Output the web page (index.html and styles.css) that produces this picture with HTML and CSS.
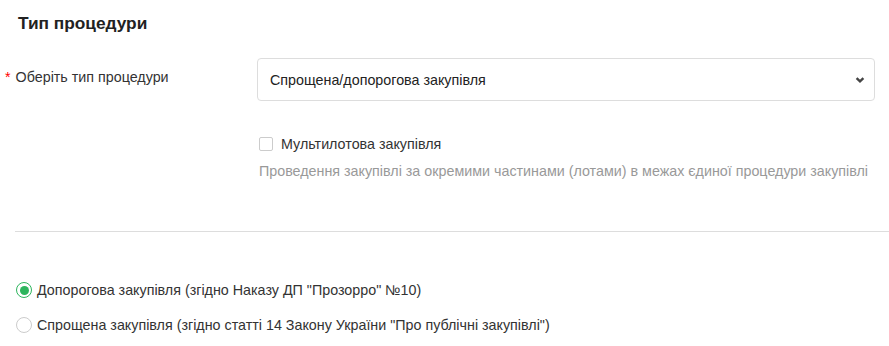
FILE: index.html
```html
<!DOCTYPE html>
<html lang="uk">
<head>
  <meta charset="UTF-8" />
  <title>Тип процедури</title>
  <link rel="stylesheet" href="styles.css">
</head>
<body>

  <!-- Тип процедури -->
  <div class="section">
    <h2 class="section-title">Тип процедури</h2>

    <div class="form-row">
      <label class="form-label"><span class="required">*</span>Оберіть тип процедури</label>
      <div class="form-control">
        <div class="select">
          <span>Спрощена/допорогова закупівля</span>
          <svg class="chevron" width="10" height="8" viewBox="0 0 10 8">
            <path d="M1.6 2.2 L5 5.4 L8.4 2.2" fill="none" stroke="#444" stroke-width="2.4"/>
          </svg>
        </div>
      </div>
    </div>

    <div class="options">
      <label class="checkbox">
        <span class="box"></span>
        Мультилотова закупівля
      </label>
      <p class="hint">Проведення закупівлі за окремими частинами (лотами) в межах єдиної процедури закупівлі</p>
    </div>
  </div>

  <hr class="divider">

  <div class="radio-group">
    <label class="radio checked"><span class="dot"></span>Допорогова закупівля (згідно Наказу ДП "Прозорро" №10)</label>
    <label class="radio"><span class="dot"></span>Спрощена закупівля (згідно статті 14 Закону України "Про публічні закупівлі")</label>
  </div>

</body>
</html>
```

FILE: styles.css
```css
* {
  box-sizing: border-box;
}

body {
  margin: 0;
  font-family: "Liberation Sans", Arial, sans-serif;
  font-size: 14.3px;
  color: #333;
  background-color: #fff;
}

.section {
  padding: 12px 14px 0 5px;
}

.section-title {
  margin: 0 0 24px 13px;
  font-size: 17.3px;
  font-weight: bold;
  color: #222;
  line-height: 22px;
}

.form-row {
  display: flex;
  align-items: center;
}

.form-label {
  width: 252px;
  align-self: flex-start;
  padding-top: 11px;
}

.required {
  color: #f00;
  margin-right: 5px;
}

.form-control {
  flex: 1;
}

.select {
  display: flex;
  align-items: center;
  justify-content: space-between;
  height: 43px;
  padding: 0 9px 0 12px;
  border: 1px solid #ddd;
  border-radius: 4px;
  color: #222;
}

.options {
  margin: 35px 0 0 254px;
}

.checkbox {
  display: flex;
  align-items: center;
  gap: 8px;
  color: #333;
}

.checkbox .box {
  width: 14px;
  height: 14px;
  border: 1px solid #ccc;
  border-radius: 2px;
}

.hint {
  margin: 11px 0 0;
  color: #999;
}

.divider {
  margin: 52px 0 0 15px;
  border: none;
  border-top: 1px solid #ddd;
}

.radio-group {
  display: flex;
  flex-direction: column;
  gap: 19px;
  padding: 50px 0 0 16px;
}

.radio {
  display: flex;
  align-items: center;
  gap: 5px;
  color: #333;
}

.radio .dot {
  width: 16px;
  height: 16px;
  border: 1px solid #ccc;
  border-radius: 50%;
  display: flex;
  align-items: center;
  justify-content: center;
}

.radio.checked .dot {
  border: 1.5px solid #2db55d;
}

.radio.checked .dot::after {
  content: "";
  width: 9px;
  height: 9px;
  border-radius: 50%;
  background-color: #2db55d;
}
```
